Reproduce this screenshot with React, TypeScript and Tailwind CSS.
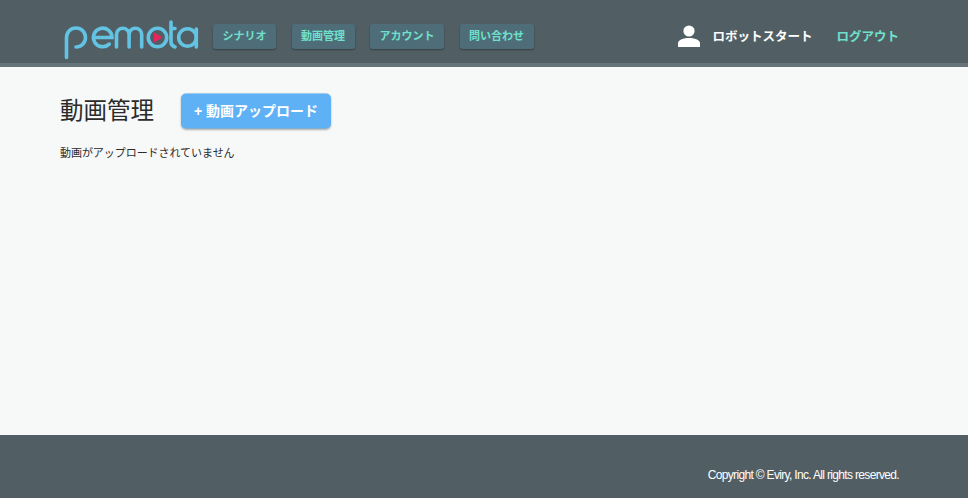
const FONT = "font-['Helvetica_Neue','Liberation_Sans','Noto_Sans_CJK_JP',sans-serif]";

const navItems = ["シナリオ", "動画管理", "アカウント", "問い合わせ"];

function Logo() {
  return (
    <svg width="136" height="40" viewBox="0 0 136 40" fill="none" className="shrink-0" aria-label="pemota">
      <g stroke="#62c3e3" strokeWidth="3.6" strokeLinecap="round">
        <path d="M2.500 37.500V17.500a9.500 9.500 0 1 1 9.500 9.500" />
        <path d="M29.500 17.500h18.500a9.300 9.300 0 1 0-2.800 6.600" />
        <path d="M52.500 27V14.500a6.300 6.300 0 0 1 12.600 0V27M65.100 14.500a6.300 6.300 0 0 1 12.600 0V27" />
        <circle cx="93.500" cy="17.500" r="9.200" />
        <path d="M107 2v19a6 6 0 0 0 4 6M107 8.500h4" />
        <circle cx="123.500" cy="17.500" r="8.800" />
        <path d="M132.300 9v18" />
      </g>
      <path d="M90 12.500l8.500 5-8.500 5z" fill="#e8245f" />
    </svg>
  );
}

function NavButton({ label }: { label: string }) {
  return (
    <a className="flex h-[25px] items-center rounded-[3px] bg-[#4f6d79] px-[9.500px] text-[11px] font-semibold text-[#6fe0cc] shadow-[0_1px_2px_rgba(0,0,0,0.35)]">
      {label}
    </a>
  );
}

export default function App() {
  return (
    <div className={`flex h-[498px] flex-col bg-[#f7f8f8] ${FONT}`}>
      <header className="flex h-[67px] shrink-0 items-center border-b-[4px] border-[#667378] bg-[#515f65] pl-[64px] pr-[69px] pt-[9px]">
        <div className="mt-[8px]">
          <Logo />
        </div>
        <nav className="ml-[13px] flex gap-[15.500px]">
          {navItems.map((item) => (
            <NavButton key={item} label={item} />
          ))}
        </nav>
        <div className="ml-auto flex items-center">
          <svg width="22" height="22" viewBox="0 0 22 22" fill="#ffffff">
            <circle cx="11" cy="6" r="5.600" />
            <path d="M0 22v-3.500C0 14.500 6 13 11 13s11 1.500 11 5.500V22z" />
          </svg>
          <span className="ml-[12px] translate-y-px text-[12.500px] font-semibold text-white">ロボットスタート</span>
          <a className="ml-[24px] translate-y-px text-[12.500px] font-semibold text-[#6fe0cc]">ログアウト</a>
        </div>
      </header>

      <main className="flex-1 pl-[60px] pt-[26px]">
        <div className="flex items-center gap-[27px]">
          <h1 className="text-[23.500px] font-normal leading-[36px] text-[#2b2b2b]">動画管理</h1>
          <button
            type="button"
            className="flex h-[35px] w-[150px] -translate-y-[0.500px] items-center justify-center rounded-[5px] bg-[#5fb1f5] text-[14px] font-semibold text-white shadow-[0_1px_2px_rgba(0,0,0,0.3)]"
          >
            + 動画アップロード
          </button>
        </div>
        <p className="mt-[15px] text-[11px] leading-[18px] tracking-[-0.05px] text-[#2b2b2b]">動画がアップロードされていません</p>
      </main>

      <footer className="flex h-[63px] shrink-0 items-start justify-end bg-[#515f65] pr-[69px] pt-[32px]">
        <p className="text-[12px] leading-[16px] tracking-[-0.67px] text-white">Copyright © Eviry, Inc. All rights reserved.</p>
      </footer>
    </div>
  );
}
